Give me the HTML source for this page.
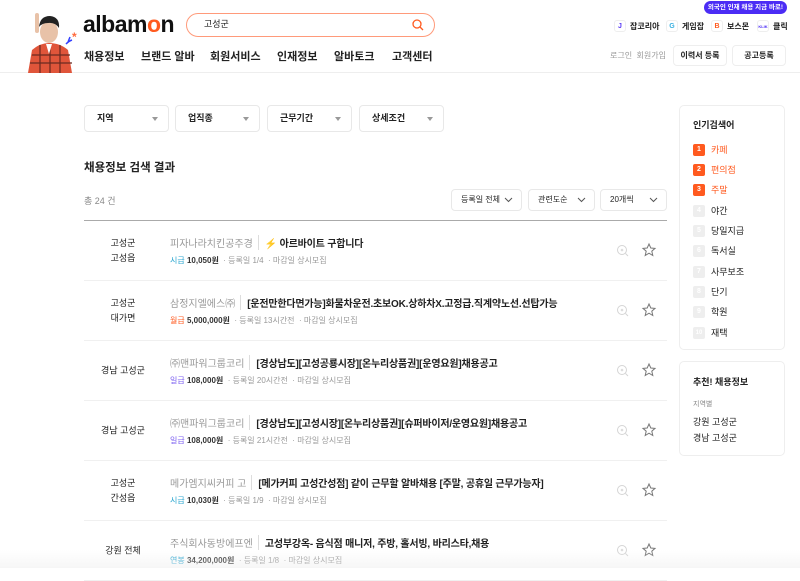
<!DOCTYPE html>
<html><head><meta charset="utf-8"><style>
*{margin:0;padding:0;box-sizing:border-box}
body{width:800px;height:568px;overflow:hidden;background:#fff;font-family:"Liberation Sans","Noto Sans CJK KR",sans-serif;color:#222;position:relative}
.a{position:absolute}
.hdr{position:absolute;left:0;top:0;width:800px;height:73px;border-bottom:1px solid #eee;background:#fff}
.nav span{position:absolute;top:48px;font-size:11px;font-weight:700;color:#222}
.fam{font-size:8px;font-weight:700;top:20px;position:absolute;display:flex;align-items:center;gap:4px}
.fam i{display:inline-block;width:12px;height:12px;border:1px solid #eee;border-radius:3px;font-style:normal;font-size:7px;text-align:center;line-height:11px}
.btn{position:absolute;top:45px;height:21px;border:1px solid #eee;border-radius:4px;font-size:8px;font-weight:700;text-align:center;line-height:19px}
.flt{position:absolute;top:105px;height:27px;width:85px;border:1px solid #e8e8e8;border-radius:4px;font-size:9px;font-weight:700;padding-left:12px;line-height:25px}
.flt:after{content:"";position:absolute;right:10px;top:11px;border:3px solid transparent;border-top:4px solid #999}
.sel{position:absolute;top:189px;height:22px;border:1px solid #e8e8e8;border-radius:4px;font-size:8px;padding-left:9px;line-height:20px}
.sel svg{position:absolute;right:8px;top:7px}
.row{position:absolute;left:84px;width:583px;height:60px;border-bottom:1px solid #f0f0f0}
.loc{position:absolute;left:0;width:78px;text-align:center;font-size:9px;line-height:15px;color:#222;top:50%;transform:translateY(-50%)}
.t{position:absolute;left:86px;top:14px;display:flex;align-items:center;font-size:10px;white-space:nowrap}
.t .c{color:#999;font-weight:400;border-right:1px solid #ddd;padding-right:5px;margin-right:6px}
.t .h{font-weight:700;color:#222;letter-spacing:-0.2px}
.m{position:absolute;left:86px;top:34px;font-size:8px;color:#999;white-space:nowrap}
.m b{color:#333}
.side{position:absolute;left:679px;width:106px;border:1px solid #eee;border-radius:5px}
.pop{position:absolute;left:13px;font-size:9px;display:flex;align-items:center;gap:6px}
.pop i{display:inline-block;width:12px;height:12px;border-radius:2px;background:#eee;color:#fff;font-style:normal;font-size:7px;text-align:center;line-height:12px;font-weight:700}
.pop.o{color:#ff5a1f}.pop.o i{background:#ff5a1f}
</style></head><body>
<div class="hdr">
 <svg class="a" style="left:10px;top:10px" width="70" height="63" viewBox="0 0 70 63">
  <ellipse cx="39" cy="22" rx="9" ry="11" fill="#e8c2a8"/>
  <path d="M29 17 Q30 6 40 6 Q50 7 49 18 Q45 12 38 13 Q32 13 29 17Z" fill="#222"/>
  <path d="M18 63 L22 40 Q30 33 39 33 Q50 33 58 40 L62 63Z" fill="#e0553a"/>
  <path d="M22 45 H60 M20 53 H62 M30 35 V63 M40 34 V63 M50 35 V63" stroke="#6a2a20" stroke-width="1.2"/>
  <path d="M36 34 L39 44 L42 34Z" fill="#fff"/>
  <rect x="25" y="3" width="4" height="20" rx="2" fill="#e8c2a8"/>
  <path d="M56 34 q3 -3 6 -4 M58 32 l2 -5" stroke="#3340ff" stroke-width="1.5" fill="none"/>
  <text x="62" y="31" font-size="12" fill="#ff6a3d" font-weight="700">*</text>
 </svg>
 <div class="a" style="left:83px;top:11px;font-size:23px;font-weight:700;letter-spacing:-0.5px;color:#111">albam<span style="color:#ff5a1f">o</span>n</div>
 <div class="a" style="left:186px;top:13px;width:249px;height:24px;border:1.5px solid #ff9a7a;border-radius:12px;font-size:9px;padding-left:17px;line-height:21px">고성군
  <svg class="a" style="right:10px;top:5px" width="12" height="12" viewBox="0 0 12 12"><circle cx="5" cy="5" r="4" stroke="#ff5a1f" stroke-width="1.3" fill="none"/><path d="M8 8 L11 11" stroke="#ff5a1f" stroke-width="1.3"/></svg></div>
 <div class="nav"><span style="left:84px">채용정보</span><span style="left:141px">브랜드 알바</span><span style="left:210px">회원서비스</span><span style="left:277px">인재정보</span><span style="left:334px">알바토크</span><span style="left:392px">고객센터</span></div>
 <div class="a" style="left:704px;top:1px;width:83px;height:13px;background:#4b2cf5;color:#fff;border-radius:7px;font-size:6.5px;text-align:center;line-height:13px;font-weight:700">외국인 인재 채용 지금 바로!</div>
 <div class="fam" style="left:614px"><i style="color:#5b3cf5;font-weight:700">J</i>잡코리아</div>
 <div class="fam" style="left:666px"><i style="color:#3ab0e0">G</i>게임잡</div>
 <div class="fam" style="left:711px"><i style="color:#ff5a1f">B</i>보스몬</div>
 <div class="fam" style="left:757px"><i style="color:#4b2cf5;font-size:4px">KLIK</i>클릭</div>
 <div class="a" style="left:610px;top:50px;font-size:8px;color:#999">로그인 &nbsp;회원가입</div>
 <div class="btn" style="left:673px;width:54px">이력서 등록</div>
 <div class="btn" style="left:732px;width:54px">공고등록</div>
</div>

<div class="flt" style="left:84px">지역</div>
<div class="flt" style="left:175px">업직종</div>
<div class="flt" style="left:267px">근무기간</div>
<div class="flt" style="left:359px">상세조건</div>

<div class="a" style="left:84px;top:159px;font-size:11.5px;font-weight:700">채용정보 검색 결과</div>
<div class="a" style="left:84px;top:194px;font-size:9px;color:#888">총 24 건</div>
<div class="sel" style="left:451px;width:71px">등록일 전체<svg width="9" height="6" viewBox="0 0 9 6"><path d="M1 1 L4.5 4.5 L8 1" stroke="#555" fill="none"/></svg></div>
<div class="sel" style="left:528px;width:67px">관련도순<svg width="9" height="6" viewBox="0 0 9 6"><path d="M1 1 L4.5 4.5 L8 1" stroke="#555" fill="none"/></svg></div>
<div class="sel" style="left:600px;width:67px">20개씩<svg width="9" height="6" viewBox="0 0 9 6"><path d="M1 1 L4.5 4.5 L8 1" stroke="#555" fill="none"/></svg></div>
<div class="a" style="left:84px;top:220px;width:583px;height:1px;background:#aaa"></div>

<div class="row" style="top:221px"><div class="loc">고성군<br>고성읍</div><div class="t"><span class="c">피자나라치킨공주경</span><span class="h"><span style="color:#e0401a">⚡</span> 아르바이트 구합니다</span></div><div class="m"><span style="color:#2aa6d0">시급</span> <b>10,050원</b> &nbsp;· 등록일 1/4 &nbsp;· 마감일 상시모집</div></div>
<div class="row" style="top:281px"><div class="loc">고성군<br>대가면</div><div class="t"><span class="c">삼정지엘에스㈜</span><span class="h">[운전만한다면가능]화물차운전.초보OK.상하차X.고정급.직계약노선.선탑가능</span></div><div class="m"><span style="color:#ff5a1f">월급</span> <b>5,000,000원</b> &nbsp;· 등록일 13시간전 &nbsp;· 마감일 상시모집</div></div>
<div class="row" style="top:341px"><div class="loc">경남 고성군</div><div class="t"><span class="c">㈜맨파워그룹코리</span><span class="h">[경상남도][고성공룡시장][온누리상품권][운영요원]채용공고</span></div><div class="m"><span style="color:#7a5cf0">일급</span> <b>108,000원</b> &nbsp;· 등록일 20시간전 &nbsp;· 마감일 상시모집</div></div>
<div class="row" style="top:401px"><div class="loc">경남 고성군</div><div class="t"><span class="c">㈜맨파워그룹코리</span><span class="h">[경상남도][고성시장][온누리상품권][슈퍼바이저/운영요원]채용공고</span></div><div class="m"><span style="color:#7a5cf0">일급</span> <b>108,000원</b> &nbsp;· 등록일 21시간전 &nbsp;· 마감일 상시모집</div></div>
<div class="row" style="top:461px"><div class="loc">고성군<br>간성읍</div><div class="t"><span class="c">메가엠지씨커피 고</span><span class="h">[메가커피 고성간성점] 같이 근무할 알바채용 [주말, 공휴일 근무가능자]</span></div><div class="m"><span style="color:#2aa6d0">시급</span> <b>10,030원</b> &nbsp;· 등록일 1/9 &nbsp;· 마감일 상시모집</div></div>
<div class="row" style="top:521px"><div class="loc">강원 전체</div><div class="t"><span class="c">주식회사동방에프엔</span><span class="h">고성부강옥- 음식점 매니저, 주방, 홀서빙, 바리스타,채용</span></div><div class="m"><span style="color:#2aa6d0">연봉</span> <b>34,200,000원</b> &nbsp;· 등록일 1/8 &nbsp;· 마감일 상시모집</div></div>

<svg class="a" style="left:612px;top:240px" width="50" height="320" viewBox="0 0 50 320">
 <g id="i"><circle cx="10" cy="10" r="4.5" stroke="#d5d5d5" fill="none"/><path d="M13.5 13.5 L16 16" stroke="#d5d5d5"/><circle cx="10" cy="10" r="1.3" fill="#ddd"/><path d="M37 4 L38.8 8 L43 8.4 L39.8 11.2 L40.8 15.5 L37 13.2 L33.2 15.5 L34.2 11.2 L31 8.4 L35.2 8Z" stroke="#777" fill="none"/></g>
 <use href="#i" y="60"/><use href="#i" y="120"/><use href="#i" y="180"/><use href="#i" y="240"/><use href="#i" y="300"/>
</svg>

<div class="side" style="top:105px;height:245px">
 <div class="a" style="left:13px;top:12px;font-size:9px;font-weight:700">인기검색어</div>
 <div class="pop o" style="top:37px"><i>1</i>카페</div>
 <div class="pop o" style="top:57px"><i>2</i>편의점</div>
 <div class="pop o" style="top:77px"><i>3</i>주말</div>
 <div class="pop" style="top:98px"><i>4</i>야간</div>
 <div class="pop" style="top:118px"><i>5</i>당일지급</div>
 <div class="pop" style="top:138px"><i>6</i>독서실</div>
 <div class="pop" style="top:159px"><i>7</i>사무보조</div>
 <div class="pop" style="top:179px"><i>8</i>단기</div>
 <div class="pop" style="top:199px"><i>9</i>학원</div>
 <div class="pop" style="top:220px"><i style="font-size:6px">10</i>재택</div>
</div>
<div class="side" style="top:361px;height:95px">
 <div class="a" style="left:13px;top:13px;font-size:9px;font-weight:700">추천! 채용정보</div>
 <div class="a" style="left:13px;top:37px;font-size:7px;color:#888">지역별</div>
 <div class="a" style="left:13px;top:53px;font-size:9px">강원 고성군</div>
 <div class="a" style="left:13px;top:69px;font-size:9px">경남 고성군</div>
</div>
<div class="a" style="left:0;top:550px;width:800px;height:18px;background:linear-gradient(rgba(255,255,255,0),rgba(238,238,238,0.5))"></div>
</body></html>
